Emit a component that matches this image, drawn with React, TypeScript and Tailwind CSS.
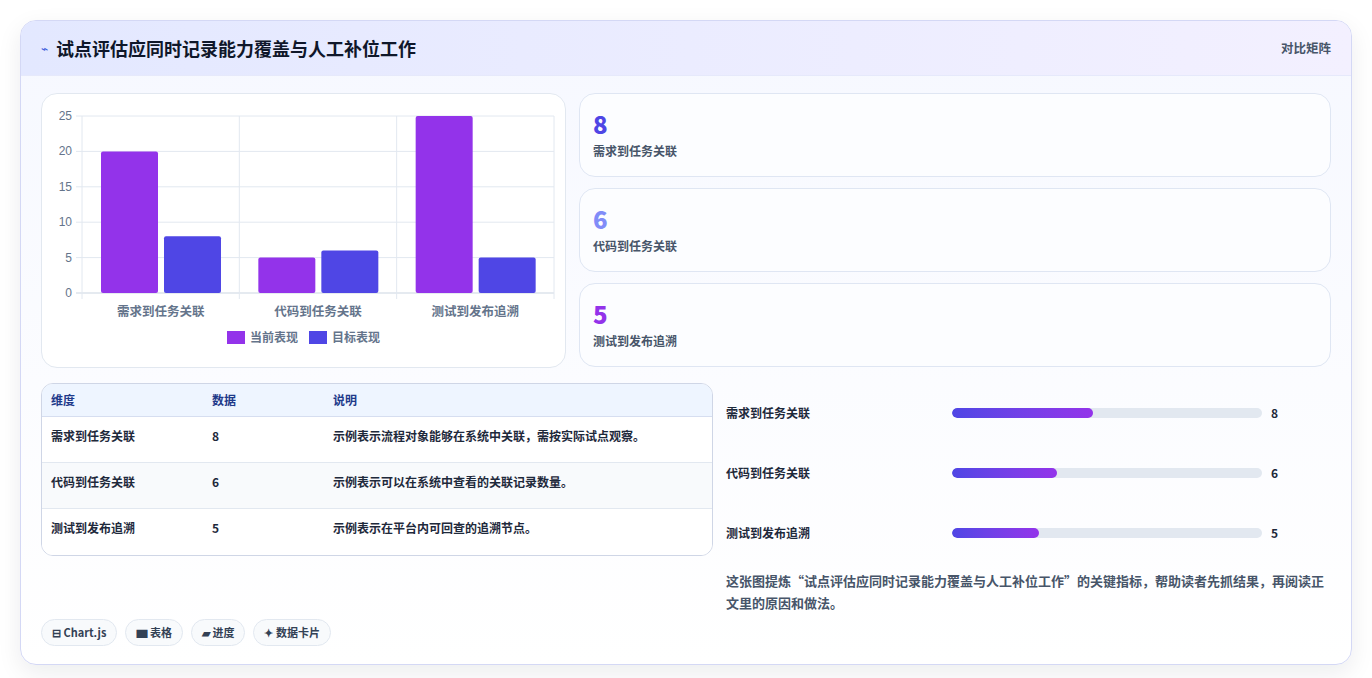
const font = { fontFamily: '"Noto Sans CJK SC", "Noto Sans", sans-serif' };

const metrics = [
  { name: "需求到任务关联", value: 8, current: 20, target: 8, fill: 45.5, note: "示例表示流程对象能够在系统中关联，需按实际试点观察。", color: "text-[#4f46e5]" },
  { name: "代码到任务关联", value: 6, current: 5, target: 6, fill: 34, note: "示例表示可以在系统中查看的关联记录数量。", color: "text-[#818cf8]" },
  { name: "测试到发布追溯", value: 5, current: 25, target: 5, fill: 28, note: "示例表示在平台内可回查的追溯节点。", color: "text-[#9333ea]" },
];

function Chart() {
  const x0 = 40;
  const x1 = 512;
  const yTop = 22;
  const yBot = 199;
  const unit = (yBot - yTop) / 25;
  const cw = (x1 - x0) / 3;
  return (
    <svg width="525" height="273" className="block">
      {[0, 5, 10, 15, 20, 25].map((t) => {
        const y = yBot - t * unit;
        return (
          <g key={t}>
            <line x1={x0 - 6} x2={x1} y1={y} y2={y} stroke={t === 0 ? "#cbd5e1" : "#e2e8f0"} />
            <text x={x0 - 10} y={y + 4} textAnchor="end" fontSize="12" fill="#64748b" fontFamily="Liberation Sans, sans-serif">
              {t}
            </text>
          </g>
        );
      })}
      {[0, 1, 2, 3].map((i) => (
        <line key={i} x1={x0 + i * cw} x2={x0 + i * cw} y1={yTop} y2={yBot + 6} stroke="#e2e8f0" />
      ))}
      {metrics.map((m, i) => {
        const cx = x0 + i * cw;
        return (
          <g key={m.name}>
            <rect x={cx + 19} y={yBot - m.current * unit} width="57" height={m.current * unit} rx="2" fill="#9333ea" />
            <rect x={cx + 82} y={yBot - m.target * unit} width="57" height={m.target * unit} rx="2" fill="#4f46e5" />
            <text x={cx + cw / 2} y={yBot + 23} textAnchor="middle" fontSize="12.5" fontWeight="600" fill="#64748b" style={font}>
              {m.name}
            </text>
          </g>
        );
      })}
      <rect x="185" y="237" width="18" height="13" fill="#9333ea" />
      <text x="208" y="248" fontSize="12" fontWeight="600" fill="#64748b" style={font}>当前表现</text>
      <rect x="267" y="237" width="18" height="13" fill="#4f46e5" />
      <text x="290" y="248" fontSize="12" fontWeight="600" fill="#64748b" style={font}>目标表现</text>
    </svg>
  );
}

export default function App() {
  return (
    <div className="min-h-screen bg-white p-5" style={font}>
      <div className="overflow-hidden rounded-2xl border border-[#d4d8f5] bg-gradient-to-b from-[#f6f8ff] to-white shadow-[0_8px_24px_rgba(15,23,42,0.08)]">
        <div className="flex h-[55px] items-center justify-between border-b border-[#e6e9fb] bg-gradient-to-r from-[#e3e8ff] to-[#f3f0ff] px-5">
          <div className="flex items-center gap-2">
            <span className="text-[12px] text-[#3b5bdb]">⌁</span>
            <h1 className="text-[18px] font-bold text-[#0f172a]">试点评估应同时记录能力覆盖与人工补位工作</h1>
          </div>
          <span className="text-[12.5px] font-semibold text-[#475569]">对比矩阵</span>
        </div>

        <div className="px-5 pt-[17px] pb-[18px]">
          <div className="flex gap-[13px]">
            <div className="w-[525px] shrink-0 overflow-hidden rounded-2xl border border-[#e2e8f0] bg-white">
              <Chart />
            </div>
            <div className="flex flex-1 flex-col gap-[11px]">
              {metrics.map((m) => (
                <div key={m.name} className="flex h-[84px] flex-col justify-center rounded-2xl border border-[#dfe6f3] bg-[#fcfdff] px-[13px]">
                  <div className={`text-[24px] leading-7 font-extrabold ${m.color}`}>{m.value}</div>
                  <div className="mt-1 text-[12px] font-semibold text-[#475569]">{m.name}</div>
                </div>
              ))}
            </div>
          </div>

          <div className="mt-[15px] flex gap-[13px]">
            <div className="w-[672px] shrink-0 self-start overflow-hidden rounded-xl border border-[#cfd6e6] bg-white">
              <div className="flex h-[33px] items-center border-b border-[#d6def0] bg-[#eef5ff] px-[9px] text-[12px] font-bold text-[#1e3a8a]">
                <div className="w-[161px]">维度</div>
                <div className="w-[121px]">数据</div>
                <div>说明</div>
              </div>
              {metrics.map((m, i) => (
                <div key={m.name} className={`flex h-[46px] items-start pt-[10px] px-[9px] text-[12px] font-semibold text-[#1e293b] ${i < 2 ? "border-b border-[#e2e8f0]" : ""} ${i === 1 ? "bg-[#f8fafc]" : "bg-white"}`}>
                  <div className="w-[161px]">{m.name}</div>
                  <div className="w-[121px]">{m.value}</div>
                  <div>{m.note}</div>
                </div>
              ))}
            </div>
            <div className="flex-1">
              <div className="flex flex-col">
                {metrics.map((m) => (
                  <div key={m.name} className="flex h-[60px] items-center">
                    <div className="w-[226px] text-[12px] font-semibold text-[#1e293b]">{m.name}</div>
                    <div className="h-[10px] w-[310px] overflow-hidden rounded-full bg-[#e2e8f0]">
                      <div className="h-full rounded-full bg-gradient-to-r from-[#4f46e5] to-[#9333ea]" style={{ width: `${m.fill}%` }} />
                    </div>
                    <div className="ml-[9px] text-[12px] font-bold text-[#1e293b]">{m.value}</div>
                  </div>
                ))}
              </div>
              <p className="mt-[7px] text-[13px] leading-[22px] font-semibold text-[#475569]">
                这张图提炼“试点评估应同时记录能力覆盖与人工补位工作”的关键指标，帮助读者先抓结果，再阅读正文里的原因和做法。
              </p>
            </div>
          </div>

          <div className="mt-[5px] flex gap-2">
            {["⊟ Chart.js", "▆ 表格", "▰ 进度", "✦ 数据卡片"].map((t) => (
              <span key={t} className="flex h-[27px] items-center rounded-full border border-[#e2e8f0] bg-[#f8fafc] px-[10px] text-[11px] font-bold text-[#334155]">
                {t}
              </span>
            ))}
          </div>
        </div>
      </div>
    </div>
  );
}
